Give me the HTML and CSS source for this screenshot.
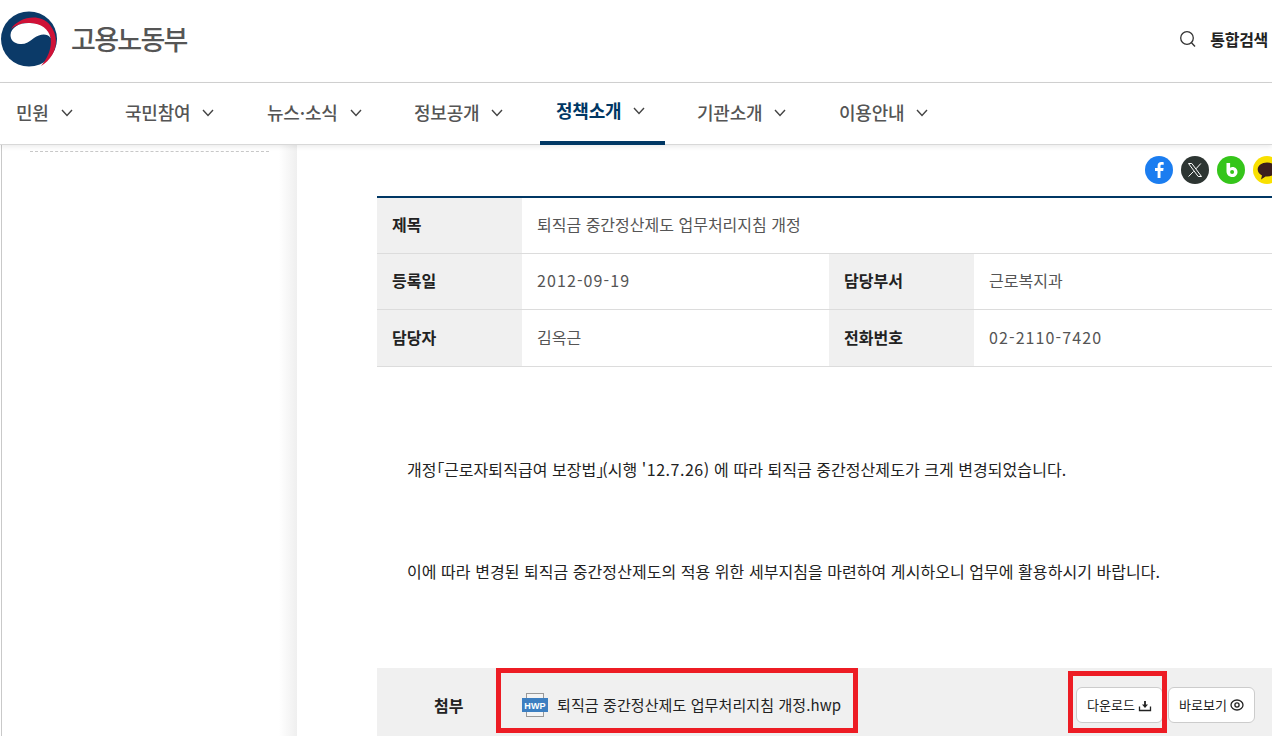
FILE: index.html
```html
<!DOCTYPE html>
<html lang="ko">
<head>
<meta charset="utf-8">
<title>고용노동부</title>
<link rel="stylesheet" href="styles.css">
</head>
<body>
<div class="page">
  <header class="top">
    <a class="brand">
      <svg class="emblem" width="58" height="56" viewBox="0 0 58 56">
        <ellipse cx="29" cy="28" rx="28" ry="27.5" fill="#0b3a68"/>
        <path d="M11 18C18 7 39 1 50 14C61 28 56 46 41 55C49 45 52 36 50.500 26C46 14 26 6 11 18Z" fill="#cf1237"/>
        <path d="M10.500 24C11 16 20 11.500 30 12C41 12.500 49 18 50.500 27C47 22 40 23 34 27C29 31 25 33.500 20 33C14 32.500 10.500 29 10.500 24Z" fill="#fff"/>
      </svg>
      <span class="brand-name">고용노동부</span>
    </a>
    <div class="search">
      <svg width="18" height="18" viewBox="0 0 18 18" fill="none" stroke="#333" stroke-width="1.300"><circle cx="8" cy="8" r="6.300"/><path d="M12.500 12.700L16 16.500"/></svg>
      <span>통합검색</span>
    </div>
  </header>
  <nav class="gnb">
    <a class="gnb-item w1">민원<svg class="chev" viewBox="0 0 12 8"><path d="M1 1l5 5.500L11 1"/></svg></a>
    <a class="gnb-item w2">국민참여<svg class="chev" viewBox="0 0 12 8"><path d="M1 1l5 5.500L11 1"/></svg></a>
    <a class="gnb-item w3">뉴스·소식<svg class="chev" viewBox="0 0 12 8"><path d="M1 1l5 5.500L11 1"/></svg></a>
    <a class="gnb-item w4">정보공개<svg class="chev" viewBox="0 0 12 8"><path d="M1 1l5 5.500L11 1"/></svg></a>
    <a class="gnb-item w5 active">정책소개<svg class="chev" viewBox="0 0 12 8"><path d="M1 1l5 5.500L11 1"/></svg></a>
    <a class="gnb-item w6">기관소개<svg class="chev" viewBox="0 0 12 8"><path d="M1 1l5 5.500L11 1"/></svg></a>
    <a class="gnb-item w7">이용안내<svg class="chev" viewBox="0 0 12 8"><path d="M1 1l5 5.500L11 1"/></svg></a>
  </nav>
  <div class="layout">
    <aside class="side"><div class="side-line"></div></aside>
    <main class="content">
      <div class="share">
        <span class="sns fb"><svg width="28" height="28" viewBox="0 0 28 28"><path d="M15.500 22v-7h2.700l.4-3h-3.100v-1.800c0-.9.300-1.400 1.500-1.400h1.700V6.200c-.5-.1-1.300-.2-2.300-.2-2.300 0-3.800 1.400-3.800 3.900V12H10v3h2.600v7z" fill="#fff"/></svg></span>
        <span class="sns tw"><svg width="28" height="28" viewBox="0 0 28 28" fill="none" stroke="#fff" stroke-width="1"><path d="M7.500 7.500h3.300l9.700 13h-3.300z"/><path d="M19.800 7.500L15 12.800M12.600 15.400l-5 5.100"/></svg></span>
        <span class="sns bd"><svg width="28" height="28" viewBox="0 0 28 28"><path fill-rule="evenodd" d="M9.500 7h3.600v4.700c.7-.5 1.600-.8 2.500-.8 2.800 0 4.900 2.200 4.900 5s-2.100 5.100-5 5.100c-3.600 0-6-2.400-6-5.800zm5.600 7.100a2 2 0 1 0 0 4 2 2 0 0 0 0-4z" fill="#fff"/></svg></span>
        <span class="sns ka"><svg width="28" height="28" viewBox="0 0 28 28"><path d="M14 6.500c-5.200 0-9.300 3.100-9.300 7 0 2.500 1.700 4.700 4.300 6l-1 4 4.500-3c.5.100 1 .1 1.500.1 5.200 0 9.300-3.200 9.300-7.100s-4.100-7-9.300-7z" fill="#3c1e1e"/></svg></span>
      </div>
      <table class="info">
        <colgroup><col class="c-th"><col class="c-td"><col class="c-th"><col></colgroup>
        <tr><th>제목</th><td colspan="3">퇴직금 중간정산제도 업무처리지침 개정</td></tr>
        <tr><th>등록일</th><td><span class="num">2012-09-19</span></td><th>담당부서</th><td>근로복지과</td></tr>
        <tr><th>담당자</th><td>김옥근</td><th>전화번호</th><td><span class="num">02-2110-7420</span></td></tr>
      </table>
      <div class="body-text">
        <p>개정<span class="brk">｢</span>근로자퇴직급여 보장법<span class="brk-end">｣</span>(시행 <span class="num-body">'12.7.26)</span> 에 따라 퇴직금 중간정산제도가 크게 변경되었습니다.</p>
        <p>이에 따라 변경된 퇴직금 중간정산제도의 적용 위한 세부지침을 마련하여 게시하오니 업무에 활용하시기 바랍니다.</p>
      </div>
      <div class="attach">
        <span class="attach-label">첨부</span>
        <a class="file">
          <svg class="hwp" width="26" height="24" viewBox="0 0 26 24"><rect x="4.500" y="0.500" width="17" height="23" fill="#f4f4f4" stroke="#999"/><rect x="0" y="5" width="26" height="14" fill="#3d7fc1"/><text x="13" y="15.500" text-anchor="middle" class="hwp-t">HWP</text></svg>
          <span>퇴직금 중간정산제도 업무처리지침 개정.hwp</span>
        </a>
        <div class="btns">
          <a class="btn">다운로드<svg width="14" height="14" viewBox="0 0 14 14" fill="none"><path d="M1.500 8.500v4h11v-4" stroke="#222" stroke-width="1.300"/><path d="M7 3v4" stroke="#222" stroke-width="1.800"/><path d="M4 6.500h6L7 10z" fill="#222"/></svg></a>
          <a class="btn">바로보기<svg width="14" height="14" viewBox="0 0 14 14" fill="none" stroke="#222" stroke-width="1.300"><ellipse cx="7" cy="7" rx="6" ry="5"/><circle cx="7" cy="7" r="2.100"/></svg></a>
        </div>
        <span class="mark mark-file"></span>
        <span class="mark mark-btn"></span>
      </div>
    </main>
  </div>
</div>
</body>
</html>
```

FILE: styles.css
```css
* { box-sizing: border-box; }
html, body { margin: 0; height: 736px; overflow: hidden; background: #fff; }
body { font-family: "Noto Sans CJK KR", "Noto Sans", sans-serif; color: #222; }
.page { width: 1272px; height: 736px; overflow: hidden; display: flex; flex-direction: column; }

.top { flex: none; height: 83px; border-bottom: 1px solid #d2d2d2; display: flex; align-items: center; justify-content: space-between; padding: 0 4px 8px 0; }
.brand { display: flex; align-items: center; gap: 13px; padding-top: 4px; }
.emblem { display: block; }
.brand-name { font-size: 27px; font-weight: 500; color: #555; letter-spacing: -1.700px; line-height: 36px; }
.search { display: flex; align-items: center; gap: 13px; font-size: 16px; font-weight: 700; color: #222; letter-spacing: -.3px; padding-top: 4px; }

.gnb { flex: none; height: 62px; display: flex; position: relative; z-index: 2; background: #fff; box-shadow: inset 0 -1px #d8d8d8, 0 2px 5px rgba(0,0,0,.08); }
.gnb-item { display: flex; align-items: center; padding: 0 16px 4px; font-size: 18px; font-weight: 500; letter-spacing: -.2px; color: #555; gap: 12px; height: 62px; }
.w1 { width: 109px; }
.w2 { width: 142px; }
.w3 { width: 147px; }
.w4 { width: 142px; }
.w5 { width: 125px; margin-right: 16px; }
.w6 { width: 142px; }
.w7 { width: 142px; }
.chev { width: 12px; height: 8px; fill: none; stroke: #444; stroke-width: 1.400; margin-top: 2px; }
.active { color: #003764; font-weight: 700; border-bottom: 4px solid #003764; padding-bottom: 4px; }

.layout { flex: 1; display: flex; min-height: 0; }
.side { flex: none; width: 296px; border-left: 1px solid #c9c9c9; margin-left: 1px; background: linear-gradient(90deg, #fff 277px, #efefef 295px); padding: 6px 0 0 28px; }
.side-line { width: 239px; border-top: 1px dashed #c8c8c8; }
.content { flex: 1; min-width: 0; padding: 11px 0 0 80px; background: #fff; }

.share { display: flex; gap: 8px; height: 28px; margin-left: 768px; width: 140px; }
.sns { flex: none; width: 28px; height: 28px; border-radius: 50%; display: block; overflow: hidden; }
.sns svg { display: block; }
.fb { background: #1b7df0; }
.tw { background: #2d3532; }
.bd { background: #35c51a; }
.ka { background: #f9e000; }

.info { margin-top: 12px; width: 920px; table-layout: fixed; border-collapse: collapse; border-top: 2px solid #003764; font-size: 16px; }
.c-th { width: 145px; }
.c-td { width: 307px; }
.info tr { height: 56.400px; border-bottom: 1px solid #dcdcdc; }
.info th { background: #f0f0f0; text-align: left; padding: 0 15px 2px; font-weight: 700; color: #222; }
.info td { padding: 0 15px 2px; color: #555; }
.info tr:nth-child(2) th, .info tr:nth-child(2) td { padding-bottom: 4px; }
.num { letter-spacing: 1.100px; }

.body-text { padding: 0 0 0 30px; height: 301px; font-size: 16px; color: #222; letter-spacing: .05px; }
.body-text p { margin: 0; line-height: 24px; white-space: nowrap; }
.body-text p:first-child { padding-top: 90px; }
.body-text p + p { padding-top: 78px; }
.brk { letter-spacing: -.5px; }
.brk-end { letter-spacing: -2px; }
.num-body { letter-spacing: .5px; }

.attach { position: relative; height: 68px; width: 895px; background: #f0f0f0; display: flex; align-items: center; padding: 6px 17px 0 57px; }
.attach-label { width: 88px; font-size: 16px; font-weight: 700; }
.file { display: flex; align-items: center; gap: 9px; font-size: 15px; letter-spacing: .1px; color: #222; white-space: nowrap; }
.hwp { display: block; }
.hwp-t { font: 700 9px "Liberation Sans", sans-serif; fill: #fff; }
.btns { margin-left: auto; display: flex; gap: 5px; }
.btn { width: 87px; height: 36px; background: #fff; border: 1px solid #ccc; border-radius: 6px; display: flex; align-items: center; justify-content: center; gap: 3px; font-size: 13px; color: #222; }

.mark { position: absolute; border: 5px solid #ed1c24; pointer-events: none; }
.mark-file { left: 119px; top: 0; width: 362px; height: 65px; }
.mark-btn { left: 691px; top: 3px; width: 99px; height: 62px; }
```
